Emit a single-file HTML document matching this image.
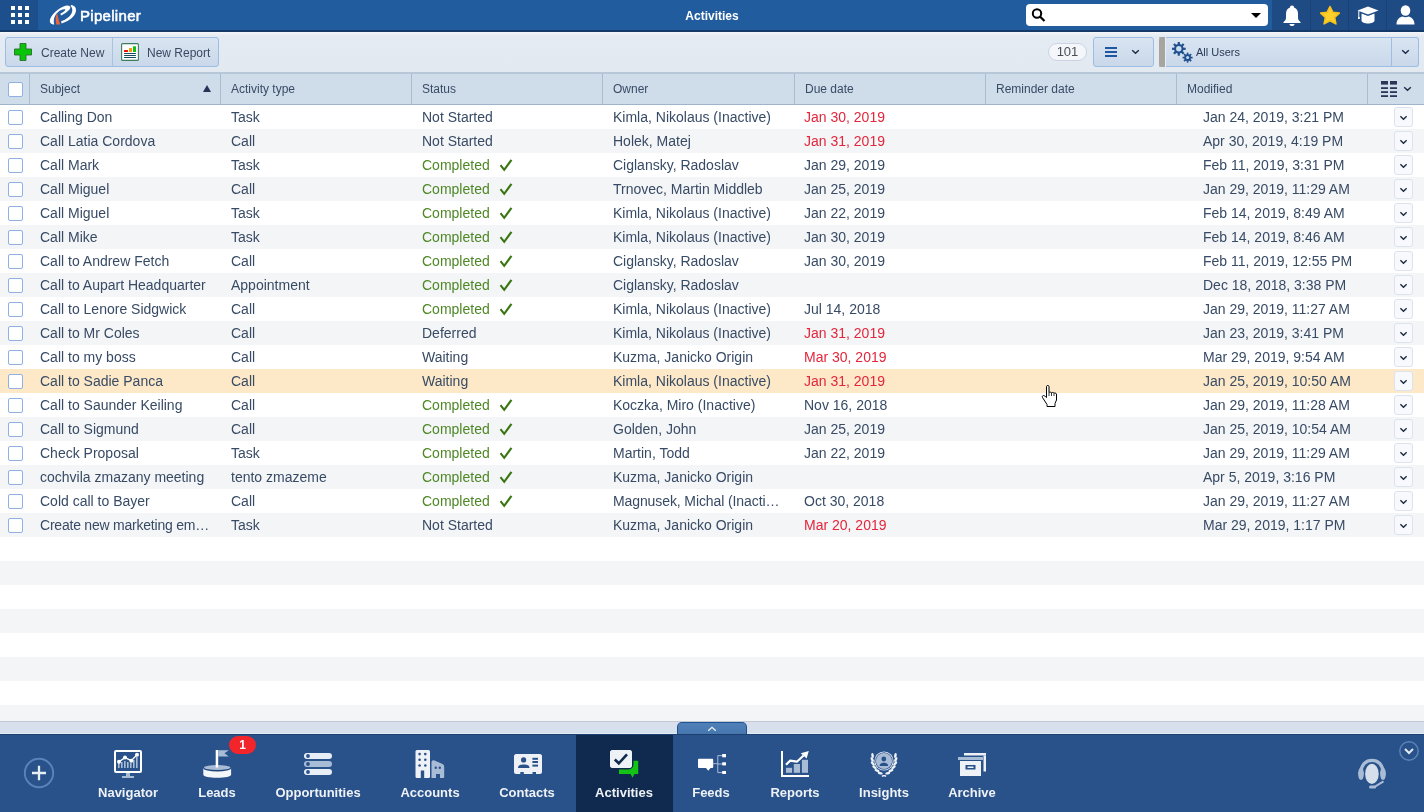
<!DOCTYPE html>
<html><head><meta charset="utf-8"><title>Activities</title>
<style>
*{box-sizing:border-box;margin:0;padding:0}
html,body{width:1424px;height:812px;overflow:hidden}
body{position:relative;will-change:transform;font-family:"Liberation Sans",sans-serif;background:#fff;color:#2f4360}
.a{position:absolute}
/* top bar */
#top{left:0;top:0;width:1424px;height:32px;background:#215c9f}
#topline{left:0;top:30px;width:1424px;height:2px;background:#163a68}
#grid{left:0;top:0;width:38px;height:30px;background:#1d4f8c}
#grid i{position:absolute;width:4px;height:4px;background:#fff}
#brand{left:80px;top:6px;font-size:15px;font-weight:normal;-webkit-text-stroke:0.55px #fff;letter-spacing:0.3px;color:#fff;line-height:20px}
#title{left:612px;width:200px;top:8px;text-align:center;font-size:12px;font-weight:bold;color:#fff;line-height:16px}
#search{left:1026px;top:4px;width:242px;height:22px;background:#fff;border-radius:4px}
#icons{left:1272px;top:0;width:152px;height:30px;background:#1f4b84}
.sep{position:absolute;top:0;width:1px;height:30px;background:#1a4275}
/* toolbar */
#tb{left:0;top:32px;width:1424px;height:40px;background:linear-gradient(#f3f6fa,#e5ebf2 4px,#e3e9f1)}
.btn{position:absolute;top:37px;height:30px;border:1px solid #9dbde3;border-radius:3px;background:linear-gradient(#d9e4f1,#c9d8ea)}
.btxt{position:absolute;font-size:12px;color:#3b4862;line-height:14px;top:46px}
/* header */
#hdr{left:0;top:72px;width:1424px;height:33px;background:#cfdcea;border-top:2px solid #b7c7d8;border-bottom:1px solid #a0b4c9}
.hs{position:absolute;top:0;width:1px;height:30px;background:#a9bcd0}
.ht{position:absolute;top:8px;font-size:12px;line-height:14px;color:#394b65}
/* rows */
.row{position:absolute;left:0;width:1424px}
.c{position:absolute;top:0;font-size:14px;line-height:24px;white-space:nowrap;color:#384b65}
.g{color:#4e8726}
.r{color:#e3263c}
.cb{position:absolute;left:8px;top:5px;width:15px;height:15px;border:1px solid #8fb1e3;border-radius:2px;background:#fff}
.chk{position:absolute;left:499px;top:6px}
.dd{position:absolute;left:1394px;top:2px;width:19px;height:20px;border:1px solid #dce3ee;border-radius:3px;background:#f7f9fc;display:block}
.dd svg{position:absolute;left:4px;top:7px}
/* bottom */
#strip{left:0;top:721px;width:1424px;height:13px;background:linear-gradient(#d9dfec,#d5e1ec);border-top:1px solid #c3c9d3;border-bottom:1px solid #e4edf6}
#tab{left:677px;top:722px;width:70px;height:13px;background:linear-gradient(#5080b8,#4676ae);border:1px solid #1f4f8c;border-top:1.5px solid #1d5396;border-bottom:none;border-radius:5px 5px 0 0}
#nav{left:0;top:734px;width:1424px;height:78px;background:#29518a}
#navtop{left:0;top:734px;width:1424px;height:1px;background:#1d4070}
#act{left:576px;top:735px;width:97px;height:77px;background:#0f2a4e}
.nl{position:absolute;top:785px;width:120px;font-size:13px;font-weight:bold;line-height:15px;color:#eef2f7;text-align:center}
.ni{position:absolute;top:750px}

</style></head><body>
<div class="row" style="top:105px;height:24px;background:#ffffff"><i class="cb"></i><span class="c" style="left:40px">Calling Don</span><span class="c" style="left:231px">Task</span><span class="c" style="left:422px">Not Started</span><span class="c" style="left:613px">Kimla, Nikolaus (Inactive)</span><span class="c r" style="left:804px">Jan 30, 2019</span><span class="c" style="left:1203px">Jan 24, 2019, 3:21 PM</span><i class="dd"><svg width="9" height="6" viewBox="0 0 9 6"><path d="M1.4 1.2 L4.5 4.2 L7.6 1.2" fill="none" stroke="#1d2b45" stroke-width="1.4"/></svg></i></div><div class="row" style="top:129px;height:24px;background:#f4f5f7"><i class="cb"></i><span class="c" style="left:40px">Call Latia Cordova</span><span class="c" style="left:231px">Call</span><span class="c" style="left:422px">Not Started</span><span class="c" style="left:613px">Holek, Matej</span><span class="c r" style="left:804px">Jan 31, 2019</span><span class="c" style="left:1203px">Apr 30, 2019, 4:19 PM</span><i class="dd"><svg width="9" height="6" viewBox="0 0 9 6"><path d="M1.4 1.2 L4.5 4.2 L7.6 1.2" fill="none" stroke="#1d2b45" stroke-width="1.4"/></svg></i></div><div class="row" style="top:153px;height:24px;background:#ffffff"><i class="cb"></i><span class="c" style="left:40px">Call Mark</span><span class="c" style="left:231px">Task</span><span class="c g" style="left:422px">Completed</span><svg class="chk" width="14" height="13" viewBox="0 0 14 13"><path d="M1.5 6.2 L5.2 10.8 L12.5 0.8" fill="none" stroke="#3a7614" stroke-width="2.1"/></svg><span class="c" style="left:613px">Ciglansky, Radoslav</span><span class="c" style="left:804px">Jan 29, 2019</span><span class="c" style="left:1203px">Feb 11, 2019, 3:31 PM</span><i class="dd"><svg width="9" height="6" viewBox="0 0 9 6"><path d="M1.4 1.2 L4.5 4.2 L7.6 1.2" fill="none" stroke="#1d2b45" stroke-width="1.4"/></svg></i></div><div class="row" style="top:177px;height:24px;background:#f4f5f7"><i class="cb"></i><span class="c" style="left:40px">Call Miguel</span><span class="c" style="left:231px">Call</span><span class="c g" style="left:422px">Completed</span><svg class="chk" width="14" height="13" viewBox="0 0 14 13"><path d="M1.5 6.2 L5.2 10.8 L12.5 0.8" fill="none" stroke="#3a7614" stroke-width="2.1"/></svg><span class="c" style="left:613px">Trnovec, Martin Middleb</span><span class="c" style="left:804px">Jan 25, 2019</span><span class="c" style="left:1203px">Jan 29, 2019, 11:29 AM</span><i class="dd"><svg width="9" height="6" viewBox="0 0 9 6"><path d="M1.4 1.2 L4.5 4.2 L7.6 1.2" fill="none" stroke="#1d2b45" stroke-width="1.4"/></svg></i></div><div class="row" style="top:201px;height:24px;background:#ffffff"><i class="cb"></i><span class="c" style="left:40px">Call Miguel</span><span class="c" style="left:231px">Task</span><span class="c g" style="left:422px">Completed</span><svg class="chk" width="14" height="13" viewBox="0 0 14 13"><path d="M1.5 6.2 L5.2 10.8 L12.5 0.8" fill="none" stroke="#3a7614" stroke-width="2.1"/></svg><span class="c" style="left:613px">Kimla, Nikolaus (Inactive)</span><span class="c" style="left:804px">Jan 22, 2019</span><span class="c" style="left:1203px">Feb 14, 2019, 8:49 AM</span><i class="dd"><svg width="9" height="6" viewBox="0 0 9 6"><path d="M1.4 1.2 L4.5 4.2 L7.6 1.2" fill="none" stroke="#1d2b45" stroke-width="1.4"/></svg></i></div><div class="row" style="top:225px;height:24px;background:#f4f5f7"><i class="cb"></i><span class="c" style="left:40px">Call Mike</span><span class="c" style="left:231px">Task</span><span class="c g" style="left:422px">Completed</span><svg class="chk" width="14" height="13" viewBox="0 0 14 13"><path d="M1.5 6.2 L5.2 10.8 L12.5 0.8" fill="none" stroke="#3a7614" stroke-width="2.1"/></svg><span class="c" style="left:613px">Kimla, Nikolaus (Inactive)</span><span class="c" style="left:804px">Jan 30, 2019</span><span class="c" style="left:1203px">Feb 14, 2019, 8:46 AM</span><i class="dd"><svg width="9" height="6" viewBox="0 0 9 6"><path d="M1.4 1.2 L4.5 4.2 L7.6 1.2" fill="none" stroke="#1d2b45" stroke-width="1.4"/></svg></i></div><div class="row" style="top:249px;height:24px;background:#ffffff"><i class="cb"></i><span class="c" style="left:40px">Call to Andrew Fetch</span><span class="c" style="left:231px">Call</span><span class="c g" style="left:422px">Completed</span><svg class="chk" width="14" height="13" viewBox="0 0 14 13"><path d="M1.5 6.2 L5.2 10.8 L12.5 0.8" fill="none" stroke="#3a7614" stroke-width="2.1"/></svg><span class="c" style="left:613px">Ciglansky, Radoslav</span><span class="c" style="left:804px">Jan 30, 2019</span><span class="c" style="left:1203px">Feb 11, 2019, 12:55 PM</span><i class="dd"><svg width="9" height="6" viewBox="0 0 9 6"><path d="M1.4 1.2 L4.5 4.2 L7.6 1.2" fill="none" stroke="#1d2b45" stroke-width="1.4"/></svg></i></div><div class="row" style="top:273px;height:24px;background:#f4f5f7"><i class="cb"></i><span class="c" style="left:40px">Call to Aupart Headquarter</span><span class="c" style="left:231px">Appointment</span><span class="c g" style="left:422px">Completed</span><svg class="chk" width="14" height="13" viewBox="0 0 14 13"><path d="M1.5 6.2 L5.2 10.8 L12.5 0.8" fill="none" stroke="#3a7614" stroke-width="2.1"/></svg><span class="c" style="left:613px">Ciglansky, Radoslav</span><span class="c" style="left:1203px">Dec 18, 2018, 3:38 PM</span><i class="dd"><svg width="9" height="6" viewBox="0 0 9 6"><path d="M1.4 1.2 L4.5 4.2 L7.6 1.2" fill="none" stroke="#1d2b45" stroke-width="1.4"/></svg></i></div><div class="row" style="top:297px;height:24px;background:#ffffff"><i class="cb"></i><span class="c" style="left:40px">Call to Lenore Sidgwick</span><span class="c" style="left:231px">Call</span><span class="c g" style="left:422px">Completed</span><svg class="chk" width="14" height="13" viewBox="0 0 14 13"><path d="M1.5 6.2 L5.2 10.8 L12.5 0.8" fill="none" stroke="#3a7614" stroke-width="2.1"/></svg><span class="c" style="left:613px">Kimla, Nikolaus (Inactive)</span><span class="c" style="left:804px">Jul 14, 2018</span><span class="c" style="left:1203px">Jan 29, 2019, 11:27 AM</span><i class="dd"><svg width="9" height="6" viewBox="0 0 9 6"><path d="M1.4 1.2 L4.5 4.2 L7.6 1.2" fill="none" stroke="#1d2b45" stroke-width="1.4"/></svg></i></div><div class="row" style="top:321px;height:24px;background:#f4f5f7"><i class="cb"></i><span class="c" style="left:40px">Call to Mr Coles</span><span class="c" style="left:231px">Call</span><span class="c" style="left:422px">Deferred</span><span class="c" style="left:613px">Kimla, Nikolaus (Inactive)</span><span class="c r" style="left:804px">Jan 31, 2019</span><span class="c" style="left:1203px">Jan 23, 2019, 3:41 PM</span><i class="dd"><svg width="9" height="6" viewBox="0 0 9 6"><path d="M1.4 1.2 L4.5 4.2 L7.6 1.2" fill="none" stroke="#1d2b45" stroke-width="1.4"/></svg></i></div><div class="row" style="top:345px;height:24px;background:#ffffff"><i class="cb"></i><span class="c" style="left:40px">Call to my boss</span><span class="c" style="left:231px">Call</span><span class="c" style="left:422px">Waiting</span><span class="c" style="left:613px">Kuzma, Janicko Origin</span><span class="c r" style="left:804px">Mar 30, 2019</span><span class="c" style="left:1203px">Mar 29, 2019, 9:54 AM</span><i class="dd"><svg width="9" height="6" viewBox="0 0 9 6"><path d="M1.4 1.2 L4.5 4.2 L7.6 1.2" fill="none" stroke="#1d2b45" stroke-width="1.4"/></svg></i></div><div class="row" style="top:369px;height:24px;background:#fde9c8"><i class="cb"></i><span class="c" style="left:40px">Call to Sadie Panca</span><span class="c" style="left:231px">Call</span><span class="c" style="left:422px">Waiting</span><span class="c" style="left:613px">Kimla, Nikolaus (Inactive)</span><span class="c r" style="left:804px">Jan 31, 2019</span><span class="c" style="left:1203px">Jan 25, 2019, 10:50 AM</span><i class="dd"><svg width="9" height="6" viewBox="0 0 9 6"><path d="M1.4 1.2 L4.5 4.2 L7.6 1.2" fill="none" stroke="#1d2b45" stroke-width="1.4"/></svg></i></div><div class="row" style="top:393px;height:24px;background:#ffffff"><i class="cb"></i><span class="c" style="left:40px">Call to Saunder Keiling</span><span class="c" style="left:231px">Call</span><span class="c g" style="left:422px">Completed</span><svg class="chk" width="14" height="13" viewBox="0 0 14 13"><path d="M1.5 6.2 L5.2 10.8 L12.5 0.8" fill="none" stroke="#3a7614" stroke-width="2.1"/></svg><span class="c" style="left:613px">Koczka, Miro (Inactive)</span><span class="c" style="left:804px">Nov 16, 2018</span><span class="c" style="left:1203px">Jan 29, 2019, 11:28 AM</span><i class="dd"><svg width="9" height="6" viewBox="0 0 9 6"><path d="M1.4 1.2 L4.5 4.2 L7.6 1.2" fill="none" stroke="#1d2b45" stroke-width="1.4"/></svg></i></div><div class="row" style="top:417px;height:24px;background:#f4f5f7"><i class="cb"></i><span class="c" style="left:40px">Call to Sigmund</span><span class="c" style="left:231px">Call</span><span class="c g" style="left:422px">Completed</span><svg class="chk" width="14" height="13" viewBox="0 0 14 13"><path d="M1.5 6.2 L5.2 10.8 L12.5 0.8" fill="none" stroke="#3a7614" stroke-width="2.1"/></svg><span class="c" style="left:613px">Golden, John</span><span class="c" style="left:804px">Jan 25, 2019</span><span class="c" style="left:1203px">Jan 25, 2019, 10:54 AM</span><i class="dd"><svg width="9" height="6" viewBox="0 0 9 6"><path d="M1.4 1.2 L4.5 4.2 L7.6 1.2" fill="none" stroke="#1d2b45" stroke-width="1.4"/></svg></i></div><div class="row" style="top:441px;height:24px;background:#ffffff"><i class="cb"></i><span class="c" style="left:40px">Check Proposal</span><span class="c" style="left:231px">Task</span><span class="c g" style="left:422px">Completed</span><svg class="chk" width="14" height="13" viewBox="0 0 14 13"><path d="M1.5 6.2 L5.2 10.8 L12.5 0.8" fill="none" stroke="#3a7614" stroke-width="2.1"/></svg><span class="c" style="left:613px">Martin, Todd</span><span class="c" style="left:804px">Jan 22, 2019</span><span class="c" style="left:1203px">Jan 29, 2019, 11:29 AM</span><i class="dd"><svg width="9" height="6" viewBox="0 0 9 6"><path d="M1.4 1.2 L4.5 4.2 L7.6 1.2" fill="none" stroke="#1d2b45" stroke-width="1.4"/></svg></i></div><div class="row" style="top:465px;height:24px;background:#f4f5f7"><i class="cb"></i><span class="c" style="left:40px">cochvila zmazany meeting</span><span class="c" style="left:231px">tento zmazeme</span><span class="c g" style="left:422px">Completed</span><svg class="chk" width="14" height="13" viewBox="0 0 14 13"><path d="M1.5 6.2 L5.2 10.8 L12.5 0.8" fill="none" stroke="#3a7614" stroke-width="2.1"/></svg><span class="c" style="left:613px">Kuzma, Janicko Origin</span><span class="c" style="left:1203px">Apr 5, 2019, 3:16 PM</span><i class="dd"><svg width="9" height="6" viewBox="0 0 9 6"><path d="M1.4 1.2 L4.5 4.2 L7.6 1.2" fill="none" stroke="#1d2b45" stroke-width="1.4"/></svg></i></div><div class="row" style="top:489px;height:24px;background:#ffffff"><i class="cb"></i><span class="c" style="left:40px">Cold call to Bayer</span><span class="c" style="left:231px">Call</span><span class="c g" style="left:422px">Completed</span><svg class="chk" width="14" height="13" viewBox="0 0 14 13"><path d="M1.5 6.2 L5.2 10.8 L12.5 0.8" fill="none" stroke="#3a7614" stroke-width="2.1"/></svg><span class="c" style="left:613px;letter-spacing:-0.1px">Magnusek, Michal (Inacti…</span><span class="c" style="left:804px">Oct 30, 2018</span><span class="c" style="left:1203px">Jan 29, 2019, 11:27 AM</span><i class="dd"><svg width="9" height="6" viewBox="0 0 9 6"><path d="M1.4 1.2 L4.5 4.2 L7.6 1.2" fill="none" stroke="#1d2b45" stroke-width="1.4"/></svg></i></div><div class="row" style="top:513px;height:24px;background:#f4f5f7"><i class="cb"></i><span class="c" style="left:40px;letter-spacing:-0.22px">Create new marketing em…</span><span class="c" style="left:231px">Task</span><span class="c" style="left:422px">Not Started</span><span class="c" style="left:613px">Kuzma, Janicko Origin</span><span class="c r" style="left:804px">Mar 20, 2019</span><span class="c" style="left:1203px">Mar 29, 2019, 1:17 PM</span><i class="dd"><svg width="9" height="6" viewBox="0 0 9 6"><path d="M1.4 1.2 L4.5 4.2 L7.6 1.2" fill="none" stroke="#1d2b45" stroke-width="1.4"/></svg></i></div><div class="row" style="top:537px;height:24px;background:#ffffff"></div><div class="row" style="top:561px;height:24px;background:#f4f5f7"></div><div class="row" style="top:585px;height:24px;background:#ffffff"></div><div class="row" style="top:609px;height:24px;background:#f4f5f7"></div><div class="row" style="top:633px;height:24px;background:#ffffff"></div><div class="row" style="top:657px;height:24px;background:#f4f5f7"></div><div class="row" style="top:681px;height:24px;background:#ffffff"></div><div class="row" style="top:705px;height:16px;background:#f4f5f7"></div>
<!-- TOP BAR -->
<div id="top" class="a"></div>
<div id="grid" class="a">
<i style="left:11px;top:6px"></i><i style="left:18px;top:6px"></i><i style="left:25px;top:6px"></i>
<i style="left:11px;top:13px"></i><i style="left:18px;top:13px"></i><i style="left:25px;top:13px"></i>
<i style="left:11px;top:20px"></i><i style="left:18px;top:20px"></i><i style="left:25px;top:20px"></i>
</div>
<div id="topline" class="a"></div>
<svg class="a" style="left:46px;top:2px" width="34" height="26" viewBox="0 0 34 26">
<path d="M3.85,19.2 C3.9,15 8,10.5 12.2,7.4 C15,5.5 19,3.6 21.5,3.6 C23.5,3.6 24.8,4.5 24.2,6.2 C23.5,8 20.5,10.5 17,12.5 L15,13.6 L14.3,11.8 C16,11 18,9.8 19.2,8.3 C19.6,7.6 19,7.2 18,7.3 C16.5,7.4 14,8.5 12.2,9.9 C9.5,12 8.2,15 7.9,17.5 C7.7,19.5 7.8,21 8.3,22.5 L7.2,22.6 C5,22 3.8,20.5 3.85,19.2 Z" fill="#fff"/>
<path d="M11,10.9 C9.8,13 9.2,17 10.3,22.6 L14.2,22.6 C12.8,18.5 12,14.5 11,10.9 Z" fill="#f0623a"/>
<path d="M25.3,3 C28.5,3.5 30.5,5.5 29.9,9.5 C29.2,13.5 24.5,18.8 15.6,21.5 L15.1,19.2 C20.5,17.5 24.8,13.8 26,10.2 C26.8,7.8 26,5 24.5,3.8 Z" fill="#fff"/>
</svg>
<div id="brand" class="a">Pipeliner</div>
<div id="title" class="a">Activities</div>
<div id="search" class="a">
<svg class="a" style="left:5px;top:4px" width="15" height="14" viewBox="0 0 15 14"><circle cx="6" cy="5.5" r="4.2" fill="none" stroke="#000" stroke-width="2"/><path d="M9 8.5 L13.5 13" stroke="#000" stroke-width="2.2"/></svg>
<svg class="a" style="left:225px;top:9px" width="10" height="5" viewBox="0 0 10 5"><path d="M0 0 H10 L5 5 Z" fill="#000"/></svg>
</div>
<div id="icons" class="a">
<i class="sep" style="left:38px"></i><i class="sep" style="left:76px"></i><i class="sep" style="left:114px"></i>
<svg class="a" style="left:11px;top:5px" width="18" height="21" viewBox="0 0 18 21"><path d="M9 0.5 C10.3 0.5 11 1.4 11 2.5 C14 3.4 15 6 15 9 L15 13 C15 15 16.5 16 17.5 17 L17.5 18 H0.5 L0.5 17 C1.5 16 3 15 3 13 L3 9 C3 6 4 3.4 7 2.5 C7 1.4 7.7 0.5 9 0.5 Z" fill="#fff"/><path d="M6.5 19 H11.5 C11.5 20.5 10.3 21 9 21 C7.7 21 6.5 20.5 6.5 19 Z" fill="#fff"/></svg>
<svg class="a" style="left:47px;top:5px" width="22" height="21" viewBox="0 0 22 21"><path d="M11 1.5 L13.9 7.3 L20.3 8.1 L15.6 12.4 L16.9 18.9 L11 15.7 L5.1 18.9 L6.4 12.4 L1.7 8.1 L8.1 7.3 Z" fill="#fdd02b" stroke="#f5c21a" stroke-width="1.6" stroke-linejoin="round"/></svg>
<svg class="a" style="left:85px;top:6px" width="22" height="18" viewBox="0 0 22 18"><path d="M11 0.5 L21.5 4.5 L11 8.5 L0.5 4.5 Z" fill="#fff"/><path d="M4.5 7.5 L11 10 L17.5 7.5 L17.5 14.5 C17.5 16.5 14 17.5 11 17.5 C8 17.5 4.5 16.5 4.5 14.5 Z" fill="#fff"/><path d="M1.8 5 L1.8 11" stroke="#fff" stroke-width="1"/><rect x="1" y="11" width="1.8" height="2" fill="#fff"/></svg>
<svg class="a" style="left:124px;top:5px" width="19" height="20" viewBox="0 0 19 20"><ellipse cx="9.5" cy="5.5" rx="4.8" ry="5.3" fill="#fff"/><path d="M0.5 19.5 C0.5 14 4 12 6.5 11.5 C8 12.5 11 12.5 12.5 11.5 C15 12 18.5 14 18.5 19.5 Z" fill="#fff"/></svg>
</div>

<!-- TOOLBAR -->
<div id="tb" class="a"></div>
<div class="btn" style="left:5px;width:214px"></div>
<div class="a" style="left:112px;top:38px;width:1px;height:28px;background:#a9c3e2"></div>
<svg class="a" style="left:14px;top:43px" width="18" height="18" viewBox="0 0 18 18"><path d="M6 0.5 H12 V6 H17.5 V12 H12 V17.5 H6 V12 H0.5 V6 H6 Z" fill="#0ac40a" stroke="#2a6e2a" stroke-width="0.9"/></svg>
<div class="btxt" style="left:41px">Create New</div>
<svg class="a" style="left:121px;top:43px" width="18" height="18" viewBox="0 0 18 18"><rect x="0.6" y="0.6" width="16.8" height="16.8" rx="1" fill="#fff" stroke="#3b7d5c" stroke-width="1.1"/><rect x="3" y="7" width="4" height="2" rx="0.5" fill="#f00a0a"/><rect x="8" y="5" width="3" height="4" rx="0.5" fill="#f59a0c"/><rect x="12" y="3.2" width="3" height="5.8" rx="0.5" fill="#12be12"/><rect x="3" y="10" width="12" height="1.1" rx="0.5" fill="#15495c"/><rect x="3" y="12" width="12" height="1.1" rx="0.5" fill="#15495c"/><rect x="3" y="14" width="12" height="1.1" rx="0.5" fill="#15495c"/></svg>
<div class="btxt" style="left:147px">New Report</div>

<div class="a" style="left:1048px;top:43px;width:39px;height:18px;border:1px solid #c9d3e2;border-radius:9px;background:#f4f6f9;font-size:13px;line-height:16px;text-align:center;color:#4a4f58">101</div>
<div class="btn" style="left:1093px;width:61px"></div>
<svg class="a" style="left:1105px;top:47px" width="12" height="10" viewBox="0 0 12 10"><rect x="0" y="0" width="12" height="2" fill="#1f57a0"/><rect x="0" y="4" width="12" height="2" fill="#1f57a0"/><rect x="0" y="8" width="12" height="2" fill="#1f57a0"/></svg>
<svg class="a" style="left:1131px;top:49px" width="9" height="6" viewBox="0 0 9 6"><path d="M1.2 1.2 L4.5 4.3 L7.8 1.2" fill="none" stroke="#1d2b45" stroke-width="1.4"/></svg>
<div class="btn" style="left:1159px;width:260px;border-left:none;border-radius:0 3px 3px 0"></div>
<div class="a" style="left:1159px;top:37px;width:7px;height:30px;background:#a8a5a0;border-radius:3px 0 0 3px;border-right:1px solid #e6eef7"></div>
<div class="a" style="left:1391px;top:38px;width:1px;height:28px;background:#9dbde3"></div>
<svg class="a" style="left:1172px;top:42px" width="22" height="22" viewBox="0 0 22 22"><circle cx="6.8" cy="6.8" r="4.8" fill="#1f4f8f"/><rect x="5.699999999999999" y="-0.10000000000000053" width="2.2" height="2.9000000000000004" fill="#1f4f8f" transform="rotate(0.0 6.8 6.8)"/><rect x="5.699999999999999" y="-0.10000000000000053" width="2.2" height="2.9000000000000004" fill="#1f4f8f" transform="rotate(45.0 6.8 6.8)"/><rect x="5.699999999999999" y="-0.10000000000000053" width="2.2" height="2.9000000000000004" fill="#1f4f8f" transform="rotate(90.0 6.8 6.8)"/><rect x="5.699999999999999" y="-0.10000000000000053" width="2.2" height="2.9000000000000004" fill="#1f4f8f" transform="rotate(135.0 6.8 6.8)"/><rect x="5.699999999999999" y="-0.10000000000000053" width="2.2" height="2.9000000000000004" fill="#1f4f8f" transform="rotate(180.0 6.8 6.8)"/><rect x="5.699999999999999" y="-0.10000000000000053" width="2.2" height="2.9000000000000004" fill="#1f4f8f" transform="rotate(225.0 6.8 6.8)"/><rect x="5.699999999999999" y="-0.10000000000000053" width="2.2" height="2.9000000000000004" fill="#1f4f8f" transform="rotate(270.0 6.8 6.8)"/><rect x="5.699999999999999" y="-0.10000000000000053" width="2.2" height="2.9000000000000004" fill="#1f4f8f" transform="rotate(315.0 6.8 6.8)"/><circle cx="6.8" cy="6.8" r="2.7" fill="#cddbee"/><circle cx="15.6" cy="15.6" r="3.4" fill="#1f4f8f"/><rect x="14.75" y="10.6" width="1.7" height="2.4000000000000004" fill="#1f4f8f" transform="rotate(0.0 15.6 15.6)"/><rect x="14.75" y="10.6" width="1.7" height="2.4000000000000004" fill="#1f4f8f" transform="rotate(45.0 15.6 15.6)"/><rect x="14.75" y="10.6" width="1.7" height="2.4000000000000004" fill="#1f4f8f" transform="rotate(90.0 15.6 15.6)"/><rect x="14.75" y="10.6" width="1.7" height="2.4000000000000004" fill="#1f4f8f" transform="rotate(135.0 15.6 15.6)"/><rect x="14.75" y="10.6" width="1.7" height="2.4000000000000004" fill="#1f4f8f" transform="rotate(180.0 15.6 15.6)"/><rect x="14.75" y="10.6" width="1.7" height="2.4000000000000004" fill="#1f4f8f" transform="rotate(225.0 15.6 15.6)"/><rect x="14.75" y="10.6" width="1.7" height="2.4000000000000004" fill="#1f4f8f" transform="rotate(270.0 15.6 15.6)"/><rect x="14.75" y="10.6" width="1.7" height="2.4000000000000004" fill="#1f4f8f" transform="rotate(315.0 15.6 15.6)"/><circle cx="15.6" cy="15.6" r="1.5" fill="#c9d8ec"/></svg>
<div class="a" style="left:1196px;top:45px;font-size:11px;line-height:14px;color:#2b3a55">All Users</div>
<svg class="a" style="left:1401px;top:49px" width="9" height="6" viewBox="0 0 9 6"><path d="M1.2 1.2 L4.5 4.3 L7.8 1.2" fill="none" stroke="#1d2b45" stroke-width="1.4"/></svg>

<!-- HEADER -->
<div id="hdr" class="a">
<i class="hs" style="left:29px"></i><i class="hs" style="left:220px"></i><i class="hs" style="left:411px"></i><i class="hs" style="left:602px"></i><i class="hs" style="left:794px"></i><i class="hs" style="left:985px"></i><i class="hs" style="left:1176px"></i><i class="hs" style="left:1367px"></i>
<i class="cb" style="top:8px"></i>
<span class="ht" style="left:40px">Subject</span>
<svg class="a" style="left:203px;top:11px" width="8" height="7" viewBox="0 0 8 7"><path d="M4 0 L8 7 H0 Z" fill="#263257"/></svg>
<span class="ht" style="left:231px">Activity type</span>
<span class="ht" style="left:422px">Status</span>
<span class="ht" style="left:613px">Owner</span>
<span class="ht" style="left:805px">Due date</span>
<span class="ht" style="left:996px">Reminder date</span>
<span class="ht" style="left:1187px">Modified</span>
<svg class="a" style="left:1381px;top:7px" width="16" height="16" viewBox="0 0 16 16"><g fill="#2b3657"><rect x="0" y="0" width="7" height="3.6"/><rect x="9" y="0" width="7" height="3.6"/><rect x="0" y="6.2" width="7" height="1.8"/><rect x="9" y="6.2" width="7" height="1.8"/><rect x="0" y="10.2" width="7" height="1.8"/><rect x="9" y="10.2" width="7" height="1.8"/><rect x="0" y="14.2" width="7" height="1.8"/><rect x="9" y="14.2" width="7" height="1.8"/></g></svg>
<svg class="a" style="left:1403px;top:12px" width="9" height="6" viewBox="0 0 9 6"><path d="M1.2 1.2 L4.5 4.3 L7.8 1.2" fill="none" stroke="#1d2b45" stroke-width="1.4"/></svg>
</div>

<!-- BOTTOM -->
<div id="strip" class="a"></div>
<div id="nav" class="a"></div>
<div id="tab" class="a"><svg class="a" style="left:29px;top:3px" width="10" height="6" viewBox="0 0 10 6"><path d="M1.2 4.8 L5 1.3 L8.8 4.8" fill="none" stroke="#eef3f9" stroke-width="1.3"/></svg></div>
<div id="navtop" class="a"></div>
<div id="act" class="a"></div>
<svg class="a" style="left:23px;top:757px" width="32" height="32" viewBox="0 0 32 32"><circle cx="16" cy="16" r="14.2" fill="none" stroke="#5a83b9" stroke-width="1.9"/><path d="M9 16 H23 M16 8.8 V23.2" stroke="#e8eef5" stroke-width="2.3"/></svg>
<div class="nl" style="left:68px">Navigator</div>
<div class="nl" style="left:157px">Leads</div>
<div class="nl" style="left:258px">Opportunities</div>
<div class="nl" style="left:370px">Accounts</div>
<div class="nl" style="left:467px">Contacts</div>
<div class="nl" style="left:564px">Activities</div>
<div class="nl" style="left:651px">Feeds</div>
<div class="nl" style="left:735px">Reports</div>
<div class="nl" style="left:824px">Insights</div>
<div class="nl" style="left:912px">Archive</div>
<!-- Navigator -->
<svg class="ni" style="left:114px" width="28" height="28" viewBox="0 0 28 28">
<rect x="1" y="1" width="26" height="21" rx="1" fill="#29518a" stroke="#fff" stroke-width="2"/>
<g fill="#a9bcd6"><rect x="4" y="13" width="1.6" height="5"/><rect x="7" y="12" width="1.6" height="6"/><rect x="10" y="11" width="1.6" height="7"/><rect x="13" y="12" width="1.6" height="6"/><rect x="16" y="13" width="1.6" height="5"/><rect x="19" y="10" width="1.6" height="8"/><rect x="22" y="7" width="1.6" height="11"/></g>
<path d="M5 11.8 L11 7.6 L17.3 10.7 L23 4.8" fill="none" stroke="#fff" stroke-width="1.4"/>
<g fill="#fff"><circle cx="5" cy="11.8" r="2"/><circle cx="11" cy="7.6" r="2"/><circle cx="17.3" cy="10.7" r="2"/><circle cx="23" cy="4.8" r="2"/></g>
<rect x="12" y="23" width="4" height="3" fill="#a9bcd6"/><rect x="8" y="26" width="12" height="2" fill="#a9bcd6"/>
</svg>
<!-- Leads -->
<svg class="ni" style="left:203px" width="29" height="28" viewBox="0 0 29 28">
<path d="M0.3 18 V24.8 C0.3 26.5 6.5 27.8 14.2 27.8 C22 27.8 28.1 26.5 28.1 24.8 V18 Z" fill="#f4f7fa"/>
<ellipse cx="14.2" cy="18.2" rx="13.9" ry="3.3" fill="#1f457a"/>
<ellipse cx="14.2" cy="17.5" rx="13.2" ry="2.5" fill="#a9bcd6"/>
<rect x="12.7" y="0" width="2.5" height="17.5" fill="#fff"/>
<path d="M15.2 0.2 H25.8 L21.5 3.3 L25.8 6.6 H15.2 Z" fill="#a9bcd6"/>
</svg>
<div class="a" style="left:229px;top:736px;width:27px;height:18px;background:#f2252a;border-radius:9px;color:#fff;font-size:12px;font-weight:bold;line-height:18px;text-align:center">1</div>
<!-- Opportunities -->
<svg class="ni" style="left:304px;top:753px" width="28" height="22" viewBox="0 0 28 22">
<rect x="0" y="0" width="28" height="6" rx="3" fill="#e8eef5"/>
<rect x="0" y="8" width="28" height="6" rx="3" fill="#a9bcd6"/>
<rect x="0" y="16" width="28" height="6" rx="3" fill="#e8eef5"/>
<g fill="#29518a"><circle cx="4" cy="3" r="1.9"/><circle cx="4" cy="11" r="1.9"/><circle cx="4" cy="19" r="1.9"/></g>
</svg>
<!-- Accounts -->
<svg class="ni" style="left:415px" width="30" height="28" viewBox="0 0 30 28">
<rect x="0.5" y="0" width="14.5" height="28" rx="1.5" fill="#eef2f7"/>
<g fill="#29518a"><circle cx="4.6" cy="4.1" r="1.3"/><circle cx="10.3" cy="4.1" r="1.3"/><circle cx="4.6" cy="9.8" r="1.3"/><circle cx="10.3" cy="9.8" r="1.3"/><circle cx="4.6" cy="15.5" r="1.3"/><circle cx="10.3" cy="15.5" r="1.3"/><rect x="5.8" y="20.5" width="3.4" height="7.5"/></g>
<path d="M16.5 28 V12.5 C16.5 10.5 18 9.8 19.5 10.4 L27.5 14 C28.7 14.6 29.2 15.5 29.2 17 V27 C29.2 27.6 28.8 28 28.2 28 H25 V24 H21 V28 Z" fill="#a9bcd6"/>
<g fill="#29518a"><circle cx="20.8" cy="17.8" r="1.2"/><circle cx="24.8" cy="17.8" r="1.2"/></g>
</svg>
<!-- Contacts -->
<svg class="ni" style="left:514px;top:754px" width="28" height="20" viewBox="0 0 28 20">
<path d="M2 0 H26 C27 0 28 1 28 2 V18 C28 19 27 20 26 20 H22 V18 H18.5 V20 H9.8 V18 H6.3 V20 H2 C1 20 0 19 0 18 V2 C0 1 1 0 2 0 Z" fill="#eef2f7"/>
<g fill="#29518a"><circle cx="9.6" cy="5.9" r="2.6"/><path d="M4 14 C4 11.2 6.5 10.6 9.7 10.6 C12.9 10.6 15.5 11.2 15.5 14 Z"/><rect x="18.4" y="3.8" width="5.6" height="2"/><rect x="18.4" y="7" width="5.6" height="2"/><rect x="18.4" y="10.6" width="5.6" height="2"/></g>
</svg>
<!-- Activities -->
<svg class="ni" style="left:609px" width="30" height="28" viewBox="0 0 30 28">
<path d="M10 10.7 H29.2 V24 H25.5 L23.5 27.8 L21.5 24 H10 Z" fill="#14c414"/>
<rect x="1" y="0" width="22" height="18" rx="3.2" fill="#eef2f7" stroke="#0f2a4e" stroke-width="3" paint-order="stroke"/>
<rect x="1" y="0" width="22" height="18" rx="3.2" fill="#eef2f7"/>
<path d="M5.8 9.5 L9.8 13.3 L18 4.3" fill="none" stroke="#0f2a4e" stroke-width="2.6"/>
</svg>
<!-- Feeds -->
<svg class="ni" style="left:698px;top:754px" width="28" height="20" viewBox="0 0 28 20">
<path d="M1 4.7 H14.2 C14.7 4.7 15.2 5.2 15.2 5.7 V13 C15.2 13.5 14.7 14 14.2 14 H12.5 L10.3 16.8 L8 14 H1 C0.5 14 0 13.5 0 13 V5.7 C0 5.2 0.5 4.7 1 4.7 Z" fill="#fff"/>
<path d="M19.8 1.6 V18.6 M19.8 1.6 H24.5 M19.8 10 H24.5 M19.8 18.6 H24.5 M15.2 9.7 H19.8" fill="none" stroke="#a9bcd6" stroke-width="1"/>
<g fill="#fff"><rect x="24.2" y="0" width="3.8" height="3.3"/><rect x="24.2" y="8.3" width="3.8" height="3.1"/><rect x="24.2" y="17" width="3.8" height="3"/></g>
</svg>
<!-- Reports -->
<svg class="ni" style="left:781px" width="29" height="28" viewBox="0 0 29 28">
<path d="M1 1 V26 H28" fill="none" stroke="#fff" stroke-width="2"/>
<g fill="#a9bcd6"><rect x="5" y="17.8" width="6.1" height="5"/><rect x="12.8" y="14" width="6.2" height="8.8"/><rect x="20.9" y="9.8" width="6.1" height="13"/></g>
<path d="M5 14.8 L9.2 10.6 L15.9 11.7 L22.6 5.5" fill="none" stroke="#fff" stroke-width="2.2" stroke-linejoin="round"/>
<path d="M27.8 1 L19.8 3.2 L25.6 8.6 Z" fill="#fff"/>
</svg>
<!-- Insights -->
<svg class="ni" style="left:870px" width="28" height="28" viewBox="0 0 28 28">
<circle cx="14" cy="11" r="9.6" fill="#eef2f7"/>
<circle cx="14" cy="11" r="8.7" fill="#29518a"/>
<circle cx="14" cy="11" r="8" fill="#a9bcd6"/>
<circle cx="13.8" cy="9" r="2.4" fill="#29518a"/><path d="M9.6 16 C9.6 13.5 11.5 12.8 13.8 12.8 C16.1 12.8 18.2 13.5 18.2 16 Z" fill="#29518a"/>
<g fill="#eef2f7"><ellipse cx="2.6" cy="5.5" rx="1.3" ry="2.6" transform="rotate(-10 2.6 5.5)"/><ellipse cx="2.2" cy="9.5" rx="1.3" ry="2.6" transform="rotate(-25 2.2 9.5)"/><ellipse cx="2.8" cy="13.5" rx="1.3" ry="2.6" transform="rotate(-40 2.8 13.5)"/><ellipse cx="4.5" cy="17.3" rx="1.3" ry="2.6" transform="rotate(-55 4.5 17.3)"/><ellipse cx="7" cy="20.5" rx="1.3" ry="2.6" transform="rotate(-70 7 20.5)"/><ellipse cx="10.2" cy="23.2" rx="1.3" ry="2.6" transform="rotate(-80 10.2 23.2)"/><ellipse cx="25.4" cy="5.5" rx="1.3" ry="2.6" transform="rotate(10 25.4 5.5)"/><ellipse cx="25.8" cy="9.5" rx="1.3" ry="2.6" transform="rotate(25 25.8 9.5)"/><ellipse cx="25.2" cy="13.5" rx="1.3" ry="2.6" transform="rotate(40 25.2 13.5)"/><ellipse cx="23.5" cy="17.3" rx="1.3" ry="2.6" transform="rotate(55 23.5 17.3)"/><ellipse cx="21" cy="20.5" rx="1.3" ry="2.6" transform="rotate(70 21 20.5)"/><ellipse cx="17.8" cy="23.2" rx="1.3" ry="2.6" transform="rotate(80 17.8 23.2)"/></g>
<path d="M11.5 26 C12.5 24.8 15.5 24.8 16.5 26 L15.5 27 C14.8 26.4 13.2 26.4 12.5 27 Z" fill="#eef2f7"/>
</svg>
<!-- Archive -->
<svg class="ni" style="left:958px;top:753px" width="28" height="23" viewBox="0 0 28 23">
<rect x="6" y="0" width="22" height="2.5" fill="#eef2f7"/>
<rect x="0" y="4" width="25" height="3" fill="#a9bcd6"/>
<rect x="25.5" y="2.5" width="2.5" height="16" fill="#eef2f7"/>
<rect x="2" y="8" width="21" height="15" fill="#eef2f7"/>
<rect x="7.5" y="12" width="10" height="4.5" fill="#29518a"/><rect x="9.5" y="13.5" width="6" height="1.5" fill="#eef2f7"/>
</svg>
<!-- headset -->
<svg class="a" style="left:1358px;top:758px" width="28" height="31" viewBox="0 0 28 31">
<path d="M3.2 14 C3.2 6.5 8 2.4 14 2.4 C20 2.4 24.8 6.5 24.8 14" fill="none" stroke="#a9bcd6" stroke-width="3.3"/>
<ellipse cx="3" cy="15.8" rx="2.9" ry="6.2" fill="#a9bcd6"/><ellipse cx="25" cy="15.8" rx="2.9" ry="6.2" fill="#a9bcd6"/>
<ellipse cx="13.9" cy="15.9" rx="7.4" ry="10.8" fill="#29518a"/>
<ellipse cx="13.9" cy="15.9" rx="6.8" ry="10.1" fill="#d5dfeb"/>
<path d="M25.5 23.4 L17 28.6" stroke="#a9bcd6" stroke-width="2"/>
<rect x="11" y="27.6" width="7.2" height="3" rx="1.5" fill="#a9bcd6"/>
</svg>
<svg class="a" style="left:1399px;top:741px" width="20" height="20" viewBox="0 0 20 20"><circle cx="10" cy="10" r="9.2" fill="none" stroke="#5a82b8" stroke-width="1.5"/><path d="M6 8 L10 12 L14 8" fill="none" stroke="#e4ebf3" stroke-width="2"/></svg>
<!-- cursor -->
<svg class="a" style="left:1041px;top:385px" width="18" height="23" viewBox="0 0 18 23">
<path d="M5.5 1.5 C5.5 0.8 6.2 0.5 6.8 0.5 C7.5 0.5 8 0.9 8 1.5 V7.5 C8.5 7 10 7 10.5 7.8 C11 7.2 12.5 7.3 13 8.2 C13.5 7.8 15 7.9 15.5 9 V15 L14 18.5 V21.5 H6 V19.5 L1.5 12.5 C1 11.5 1.5 10.5 2.5 10.5 C3.3 10.5 4.5 11.7 5.5 12.5 Z" fill="#fff" stroke="#000" stroke-width="1"/>
<path d="M10.5 7.8 V11 M13 8.2 V11 M8 7.5 V11" stroke="#000" stroke-width="0.8"/>
</svg>

</body></html>
